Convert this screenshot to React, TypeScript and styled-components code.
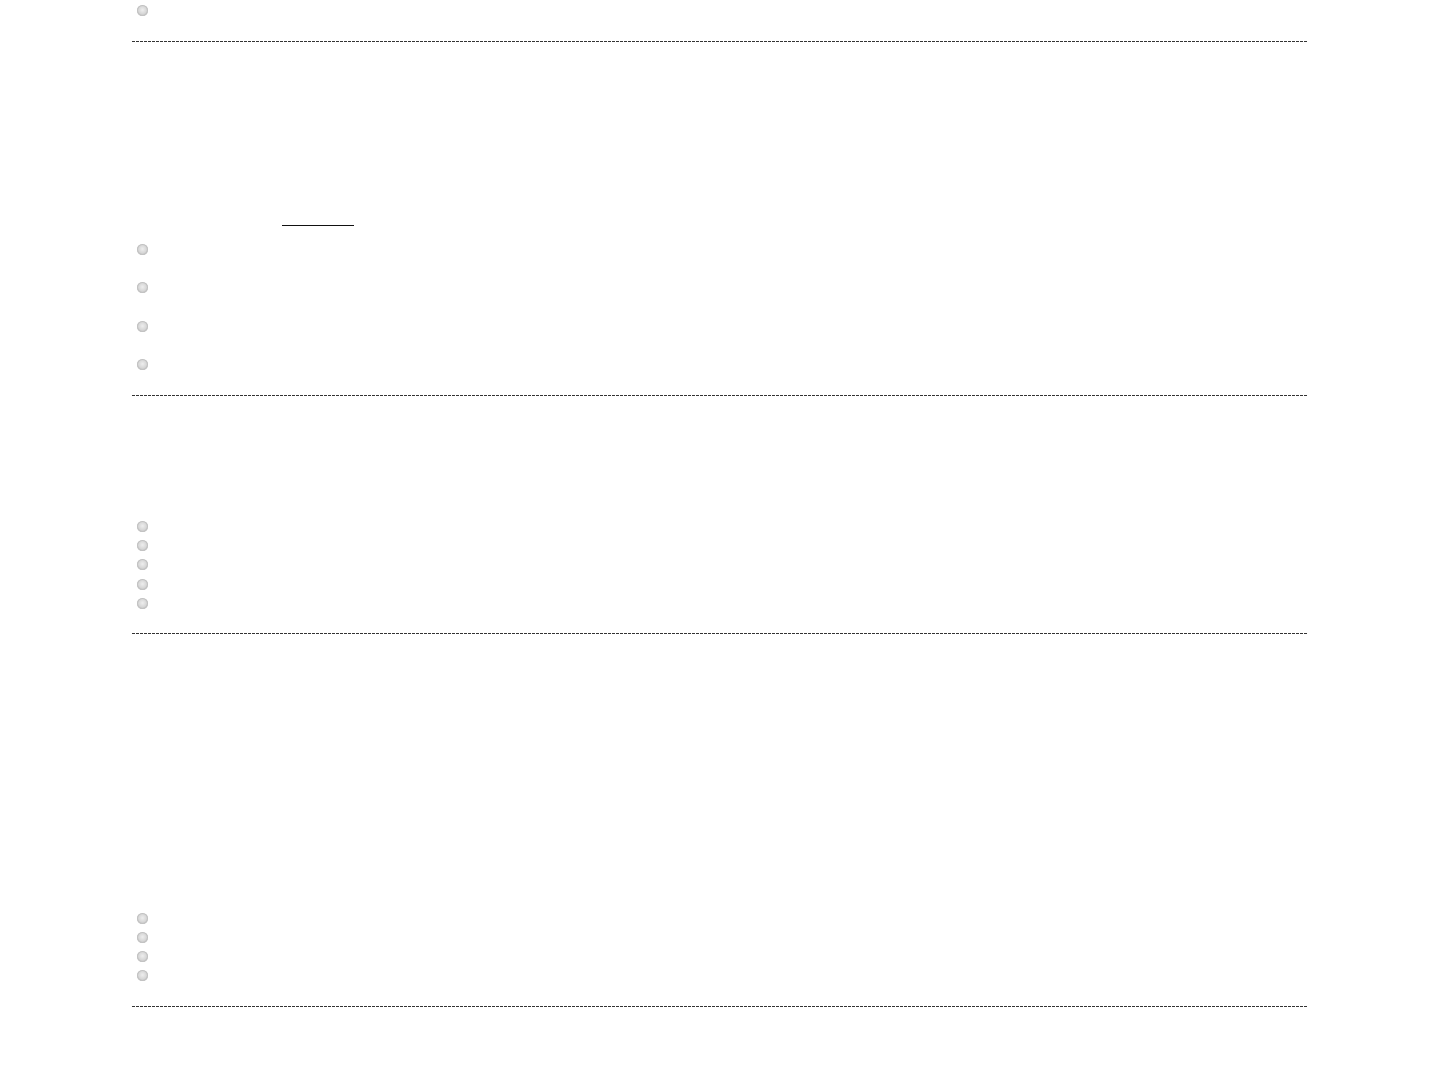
import React from "react";
import styled, { createGlobalStyle } from "styled-components";

const Global = createGlobalStyle`
  html, body { margin: 0; padding: 0; background: #ffffff; }
  body { font-family: "Liberation Sans", Arial, sans-serif; color: #ffffff; }
`;

const Page = styled.div`
  width: 1176px;
  margin-left: 132px;
  display: flex;
  flex-direction: column;
`;

const Section = styled.section<{ $top: number; $bottom: number }>`
  display: flex;
  flex-direction: column;
  padding-top: ${(p) => p.$top}px;
  padding-bottom: ${(p) => p.$bottom}px;
`;

const Rule = styled.hr`
  border: 0;
  margin: 0;
  height: 1px;
  background: repeating-linear-gradient(
    90deg,
    #333333 0,
    #333333 3px,
    transparent 3px,
    transparent 4px
  );
`;

const List = styled.ul<{ $gap: number }>`
  list-style: none;
  margin: 0;
  padding: 0;
  display: flex;
  flex-direction: column;
  gap: ${(p) => p.$gap}px;
`;

const Item = styled.li`
  display: flex;
  align-items: center;
  height: 11px;
  padding-left: 5px;
`;

const Bullet = styled.span`
  width: 11px;
  height: 11px;
  border-radius: 50%;
  box-sizing: border-box;
  background: radial-gradient(circle at 50% 45%, #eeeeee 0%, #d6d6d6 50%, #b4b4b4 85%, #c8c8c8 100%);
  box-shadow: inset 0 0 0 1px #c2c2c2;
`;

const Underline = styled.span`
  display: block;
  margin-left: 150px;
  width: 72px;
  height: 0;
  border-top: 1px solid #111111;
  margin-bottom: 18px;
`;

const Bullets: React.FC<{ count: number; gap: number }> = ({ count, gap }) => (
  <List $gap={gap}>
    {Array.from({ length: count }).map((_, i) => (
      <Item key={i}>
        <Bullet />
      </Item>
    ))}
  </List>
);

export default function App() {
  return (
    <>
      <Global />
      <Page>
        <Section $top={5} $bottom={25}>
          <Bullets count={1} gap={0} />
        </Section>
        <Rule />
        <Section $top={183} $bottom={25}>
          <Underline />
          <Bullets count={4} gap={27.33} />
        </Section>
        <Rule />
        <Section $top={125} $bottom={24}>
          <Bullets count={5} gap={8.25} />
        </Section>
        <Rule />
        <Section $top={279} $bottom={25}>
          <Bullets count={4} gap={8} />
        </Section>
        <Rule />
        <Section $top={60} $bottom={0} />
      </Page>
    </>
  );
}
